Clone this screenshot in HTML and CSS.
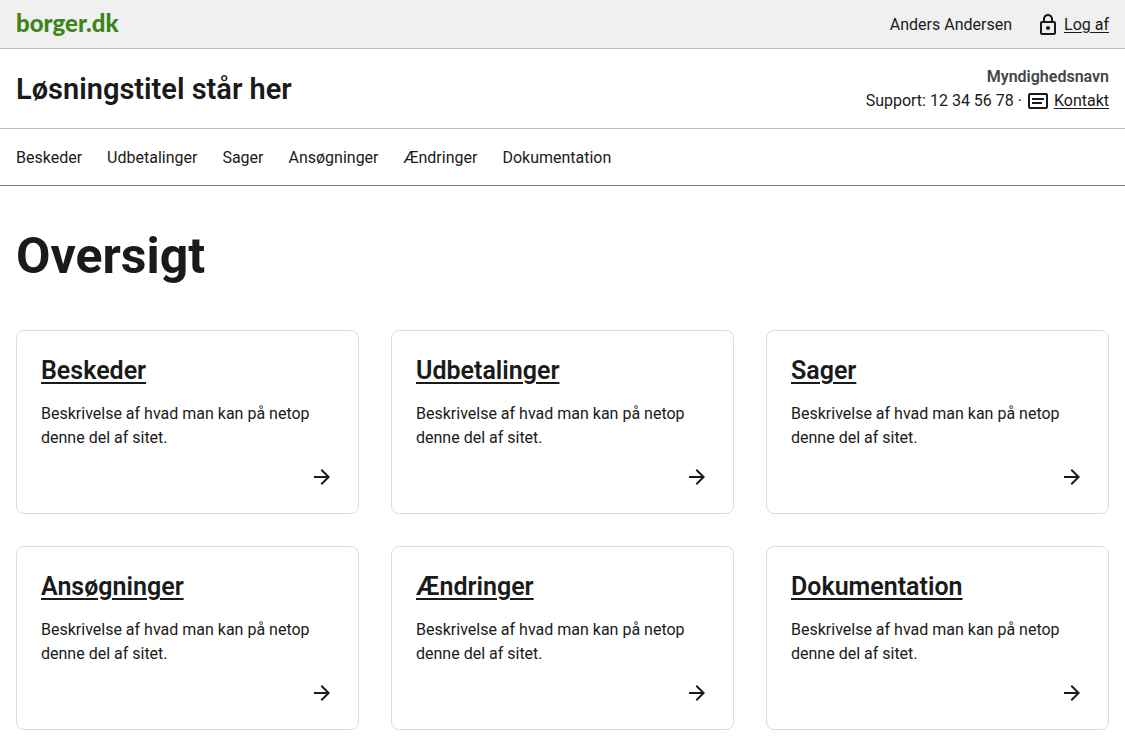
FILE: index.html
```html
<!DOCTYPE html>
<html lang="da">
<head>
<meta charset="utf-8">
<meta name="viewport" content="width=device-width, initial-scale=1">
<title>Oversigt</title>
<link rel="stylesheet" href="styles.css">
</head>
<body>
<svg class="sprite" aria-hidden="true">
  <symbol id="arrow" viewBox="0 0 24 24"><path d="M12 4l-1.41 1.41L16.17 11H4v2h12.17l-5.58 5.59L12 20l8-8z"/></symbol>
</svg>
<header>
  <div class="portal">
    <a class="logo" href="#">borger.dk</a>
    <div class="user">
      <span>Anders Andersen</span>
      <a class="icon-link" href="#">
        <svg class="icon" viewBox="0 0 24 24" aria-hidden="true"><path d="M18 8h-1V6c0-2.760-2.240-5-5-5S7 3.240 7 6v2H6c-1.100 0-2 .9-2 2v10c0 1.100.9 2 2 2h12c1.100 0 2-.9 2-2V10c0-1.100-.9-2-2-2zM9 6c0-1.660 1.340-3 3-3s3 1.340 3 3v2H9V6zm9 14H6V10h12v10zm-6-3c1.100 0 2-.9 2-2s-.9-2-2-2-2 .9-2 2 .9 2 2 2z"/></svg>
        <span class="link-text">Log af</span>
      </a>
    </div>
  </div>
  <div class="solution">
    <p class="solution-title">Løsningstitel står her</p>
    <div class="authority">
      <strong class="authority-name">Myndighedsnavn</strong>
      <div class="support">
        <span>Support: 12 34 56 78 ·</span>
        <a class="icon-link" href="#">
          <svg class="icon" viewBox="0 0 24 24" aria-hidden="true"><path d="M4 4h16a2 2 0 0 1 2 2v12a2 2 0 0 1-2 2H4a2 2 0 0 1-2-2V6a2 2 0 0 1 2-2zm0 2v12h16V6zm2 3h12v2H6zm0 4h10v2H6z" fill-rule="evenodd"/></svg>
          <span class="link-text">Kontakt</span>
        </a>
      </div>
    </div>
  </div>
  <nav class="nav" aria-label="Hovedmenu">
    <a href="#">Beskeder</a>
    <a href="#">Udbetalinger</a>
    <a href="#">Sager</a>
    <a href="#">Ansøgninger</a>
    <a href="#">Ændringer</a>
    <a href="#">Dokumentation</a>
  </nav>
</header>
<main class="main">
  <h1>Oversigt</h1>
  <div class="cards">
    <article class="card"><h2><a href="#">Beskeder</a></h2><p>Beskrivelse af hvad man kan på netop denne del af sitet.</p><svg class="icon arrow" aria-hidden="true"><use href="#arrow"/></svg></article>
    <article class="card"><h2><a href="#">Udbetalinger</a></h2><p>Beskrivelse af hvad man kan på netop denne del af sitet.</p><svg class="icon arrow" aria-hidden="true"><use href="#arrow"/></svg></article>
    <article class="card"><h2><a href="#">Sager</a></h2><p>Beskrivelse af hvad man kan på netop denne del af sitet.</p><svg class="icon arrow" aria-hidden="true"><use href="#arrow"/></svg></article>
    <article class="card"><h2><a href="#">Ansøgninger</a></h2><p>Beskrivelse af hvad man kan på netop denne del af sitet.</p><svg class="icon arrow" aria-hidden="true"><use href="#arrow"/></svg></article>
    <article class="card"><h2><a href="#">Ændringer</a></h2><p>Beskrivelse af hvad man kan på netop denne del af sitet.</p><svg class="icon arrow" aria-hidden="true"><use href="#arrow"/></svg></article>
    <article class="card"><h2><a href="#">Dokumentation</a></h2><p>Beskrivelse af hvad man kan på netop denne del af sitet.</p><svg class="icon arrow" aria-hidden="true"><use href="#arrow"/></svg></article>
  </div>
</main>
</body>
</html>
```

FILE: styles.css
```css
* { box-sizing: border-box; }
body {
  margin: 0;
  background: #fff;
  color: #1a1a1a;
  font: 16px/24px Roboto, "Liberation Sans", sans-serif;
}
h1, h2, p { margin: 0; }
a { color: inherit; }
.sprite { display: none; }
.icon { width: 24px; height: 24px; flex: none; fill: currentColor; }

.portal, .solution {
  display: flex;
  justify-content: space-between;
  border-bottom: 1px solid #bfbfbf;
}
.portal { align-items: flex-start; padding: 13px 16px 11px; background: #f0f0f0; }
.logo {
  color: #3f831c;
  font: 900 24px/20px Lato, sans-serif;
  text-decoration: none;
}
.user { display: flex; gap: 24px; }
.icon-link { display: flex; gap: 4px; text-decoration: none; }
.link-text { text-decoration: underline; text-underline-offset: 2px; }

.solution { align-items: center; min-height: 80px; padding: 15px 16px; }
.solution-title { font-size: 29px; line-height: 36px; font-weight: 600; }
.authority { text-align: right; line-height: 24px; }
.authority-name { display: block; color: #454545; font-weight: 600; }
.support { display: flex; justify-content: flex-end; gap: 4px; }

.nav {
  display: flex;
  flex-wrap: wrap;
  gap: 8px 25px;
  padding: 17px 16px 15px;
  border-bottom: 1px solid #808080;
}
.nav a { text-decoration: none; }

.main { padding: 40px 16px 16px; }
h1 { font-size: 50px; line-height: 60px; font-weight: 700; margin-bottom: 44px; }
.cards { display: grid; grid-template-columns: repeat(3, minmax(0, 1fr)); gap: 32px; }
.card {
  display: flex;
  flex-direction: column;
  gap: 15px;
  padding: 24px;
  border: 1px solid #dcdcdc;
  border-radius: 8px;
}
h2 { font-size: 25px; line-height: 32px; font-weight: 600; }
h2 a { text-decoration-thickness: 2px; text-underline-offset: 3px; }
.arrow { align-self: flex-end; }
```
